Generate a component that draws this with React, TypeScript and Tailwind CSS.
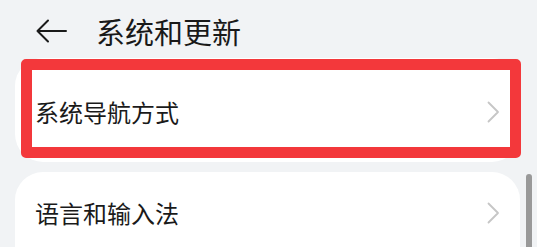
const font = { fontFamily: '"Noto Sans CJK SC", "Noto Sans", sans-serif' };

function Chevron() {
  return (
    <svg width="13" height="22" viewBox="0 0 13 22" fill="none" className="shrink-0">
      <path d="M1.5 1.5 L11 11 L1.5 20.5" stroke="#c6c6c6" strokeWidth="1.8" strokeLinecap="round" strokeLinejoin="round" />
    </svg>
  );
}

function BackArrow() {
  return (
    <svg width="31" height="24" viewBox="0 0 31 24" fill="none" className="shrink-0">
      <path d="M1.5 12 H30 M12 1.5 L1.5 12 L12 22.5" stroke="#1a1a1a" strokeWidth="2" strokeLinecap="round" strokeLinejoin="round" />
    </svg>
  );
}

function Row({ label }: { label: string }) {
  return (
    <div className="flex items-center justify-between pl-[20px] pr-[20px]">
      <span className="text-[24px] leading-none text-[#1a1a1a]">{label}</span>
      <Chevron />
    </div>
  );
}

export default function App() {
  return (
    <div className="relative w-full h-[247px] overflow-hidden bg-[#f1f3f5]" style={font}>
      {/* Header */}
      <div className="flex items-center h-[58px] pl-[36px] gap-[29px] pt-[4px]">
        <BackArrow />
        <h1 className="text-[29px] leading-none font-normal text-[#191919]">系统和更新</h1>
      </div>

      {/* Card 1 */}
      <div className="relative ml-[15px] mr-[17px] h-[104px] rounded-[28px] bg-white flex flex-col justify-center pt-[4px]">
        <Row label="系统导航方式" />
        {/* annotation outline */}
        <div className="absolute left-[6px] top-[1px] w-[500px] h-[99px] rounded-[5px] border-[11px] border-[#f3383b]" />
      </div>

      {/* Card 2 */}
      <div className="mt-[10px] ml-[15px] mr-[17px] h-[120px] rounded-t-[28px] bg-white">
        <div className="h-[82px] flex flex-col justify-center">
          <Row label="语言和输入法" />
        </div>
      </div>

      {/* Scrollbar */}
      <div className="absolute left-[526px] top-[174px] w-[6px] h-[120px] rounded-full bg-[#999999]" />
    </div>
  );
}
